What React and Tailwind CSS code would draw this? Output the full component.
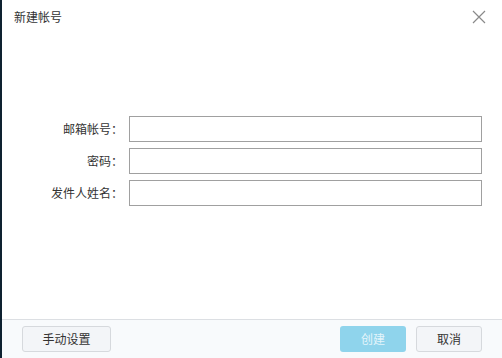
import React from 'react';

const font = { fontFamily: '"Microsoft YaHei", "Noto Sans CJK SC", sans-serif' };

const Field = ({ label }) => (
    <div className="flex items-center h-[26px]">
        <label className="w-[127px] pr-[6px] text-right text-[12px] text-[#333]">{label}：</label>
        <input className="w-[353px] h-[26px] border border-[#a0a0a0] bg-white outline-none" />
    </div>
);

export default function App() {
    return (
        <div className="w-[502px] h-[358px] flex bg-white overflow-hidden" style={font}>
            {/* dark edge of window behind */}
            <div className="w-[2px] h-full bg-[#0e2130]" />
            <div className="flex-1 flex flex-col">
                <div className="h-[34px] flex items-center justify-between pl-[12px] pr-[16px]">
                    <span className="text-[12px] text-[#333]">新建帐号</span>
                    <svg width="14" height="14" viewBox="0 0 14 14">
                        <path d="M1 1L13 13M13 1L1 13" stroke="#8a8a8a" strokeWidth="1.2" />
                    </svg>
                </div>
                <div className="flex-1 flex flex-col gap-[6px] pt-[82px]">
                    <Field label="邮箱帐号" />
                    <Field label="密码" />
                    <Field label="发件人姓名" />
                </div>
                <div className="h-[39px] border-t border-[#dcdfe3] bg-[#f8fafc] flex items-center justify-between pl-[20px] pr-[20px]">
                    <button className="w-[89px] h-[26px] rounded-[3px] border border-[#d6d9dd] bg-[#f3f5f8] text-[12px] text-[#333]">手动设置</button>
                    <div className="flex gap-[10px]">
                        <button className="w-[66px] h-[26px] rounded-[3px] bg-[#8fd4ec] text-[12px] text-[#e4f5fb]">创建</button>
                        <button className="w-[66px] h-[26px] rounded-[3px] border border-[#d6d9dd] bg-[#f3f5f8] text-[12px] text-[#333]">取消</button>
                    </div>
                </div>
            </div>
        </div>
    );
}
